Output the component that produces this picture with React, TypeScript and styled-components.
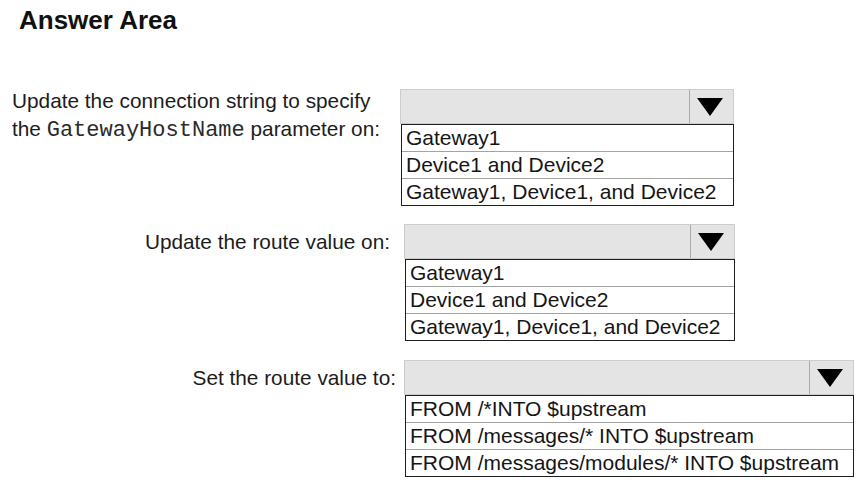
import React from "react";
import styled, { createGlobalStyle } from "styled-components";

const GlobalStyle = createGlobalStyle`
  html, body {
    margin: 0;
    padding: 0;
    background: #ffffff;
  }
  body {
    font-family: "Liberation Sans", Arial, sans-serif;
    color: #1c1c1c;
  }
  * { box-sizing: border-box; }
`;

const Page = styled.div`
  width: 865px;
  height: 487px;
  padding: 7px 0 0 12px;
  overflow: hidden;
  background: #ffffff;
`;

const Title = styled.h1`
  margin: 0 0 54px 7px;
  font-size: 26px;
  line-height: 26px;
  font-weight: 700;
  color: #111111;
`;

const Question = styled.div<{ $gap: number }>`
  display: flex;
  align-items: flex-start;
  margin-top: ${(p) => p.$gap}px;
`;

const Label = styled.div<{ $width: number; $align: "left" | "right"; $padTop: number; $padRight: number }>`
  width: ${(p) => p.$width}px;
  flex: none;
  text-align: ${(p) => p.$align};
  padding-top: ${(p) => p.$padTop}px;
  padding-right: ${(p) => p.$padRight}px;
  font-size: 20.8px;
  line-height: 28px;
  color: #1c1c1c;
  white-space: nowrap;
`;

const Code = styled.span`
  font-family: "Liberation Mono", "Courier New", monospace;
  font-size: 22px;
  color: #2a2a2a;
`;

const Dropdown = styled.div<{ $width: number; $offset: number }>`
  width: ${(p) => p.$width}px;
  flex: none;
  margin-top: ${(p) => p.$offset}px;
  display: flex;
  flex-direction: column;
`;

const Select = styled.div`
  height: 35px;
  display: flex;
  background: #e4e4e4;
  border: 1px solid #cdcdcd;
`;

const Field = styled.div`
  flex: 1;
`;

const Toggle = styled.div`
  width: 44px;
  flex: none;
  border-left: 1px solid #a9a9a9;
  display: flex;
  justify-content: center;
  padding-top: 8px;
  padding-right: 3px;
`;

const Options = styled.div`
  margin-left: 1px;
  border: 1px solid #1e1e1e;
  background: #ffffff;
`;

const Option = styled.div`
  height: 27px;
  padding-left: 4px;
  font-size: 21px;
  line-height: 26px;
  color: #151515;
  white-space: nowrap;
  & + & {
    border-top: 1px solid #a3a3a3;
  }
  &:first-child {
    height: 26px;
  }
`;

const Arrow = () => (
  <svg width="26" height="18" viewBox="0 0 26 18" aria-hidden="true">
    <polygon points="0,0 26,0 13,18" fill="#000000" />
  </svg>
);

type Q = {
  label: React.ReactNode;
  labelWidth: number;
  align: "left" | "right";
  padTop: number;
  padRight: number;
  dropWidth: number;
  dropOffset: number;
  gap: number;
  options: string[];
};

const deviceOptions = ["Gateway1", "Device1 and Device2", "Gateway1, Device1, and Device2"];

const questions: Q[] = [
  {
    label: (
      <>
        Update the connection string to specify
        <br />
        the <Code>GatewayHostName</Code> parameter on:
      </>
    ),
    labelWidth: 388,
    align: "left",
    padTop: 0,
    padRight: 0,
    dropWidth: 334,
    dropOffset: 2,
    gap: 0,
    options: deviceOptions,
  },
  {
    label: "Update the route value on:",
    labelWidth: 392,
    align: "right",
    padTop: 4,
    padRight: 14,
    dropWidth: 331,
    dropOffset: 0,
    gap: 18,
    options: deviceOptions,
  },
  {
    label: "Set the route value to:",
    labelWidth: 392,
    align: "right",
    padTop: 4,
    padRight: 8,
    dropWidth: 450,
    dropOffset: 0,
    gap: 19,
    options: [
      "FROM /*INTO $upstream",
      "FROM /messages/* INTO $upstream",
      "FROM /messages/modules/* INTO $upstream",
    ],
  },
];

export default function App() {
  return (
    <>
      <GlobalStyle />
      <Page>
        <Title>Answer Area</Title>
        {questions.map((q, i) => (
          <Question key={i} $gap={q.gap}>
            <Label $width={q.labelWidth} $align={q.align} $padTop={q.padTop} $padRight={q.padRight}>
              {q.label}
            </Label>
            <Dropdown $width={q.dropWidth} $offset={q.dropOffset}>
              <Select>
                <Field />
                <Toggle>
                  <Arrow />
                </Toggle>
              </Select>
              <Options>
                {q.options.map((o) => (
                  <Option key={o}>{o}</Option>
                ))}
              </Options>
            </Dropdown>
          </Question>
        ))}
      </Page>
    </>
  );
}
